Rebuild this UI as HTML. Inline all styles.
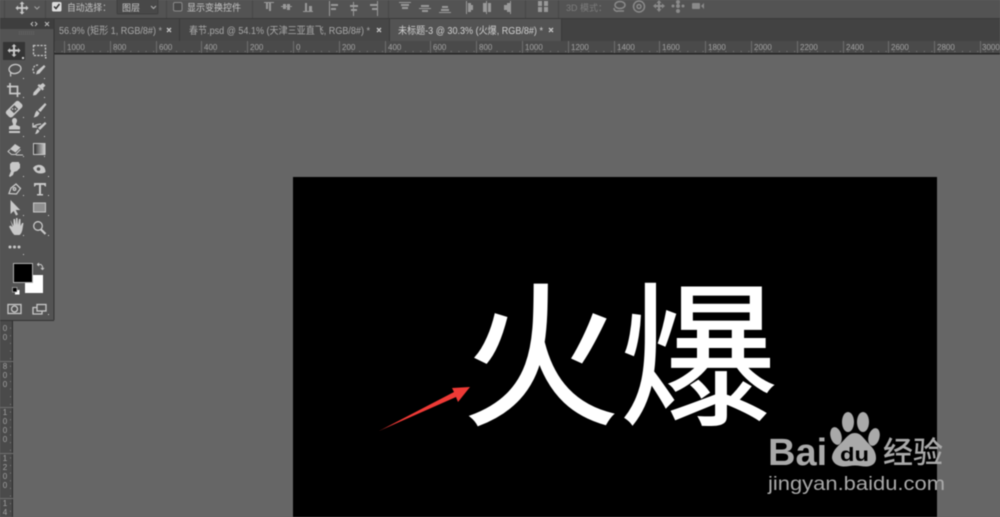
<!DOCTYPE html>
<html><head><meta charset="utf-8">
<style>
html,body{margin:0;padding:0;background:#666;}
body{width:1000px;height:517px;overflow:hidden;position:relative;font-family:"Liberation Sans","Noto Sans CJK SC",sans-serif;}
svg{position:absolute;left:0;top:0;}
text{font-family:"Liberation Sans","Noto Sans CJK SC",sans-serif;}
.soft{filter:blur(.45px);}
</style></head><body>
<svg width="1000" height="517" viewBox="0 0 1000 517" xmlns="http://www.w3.org/2000/svg">
<rect width="1000" height="517" fill="#666"/>
<g class="soft">
<!-- options bar -->
<rect width="1000" height="19" fill="#535353"/>
<rect y="18" width="1000" height="1" fill="#3a3a3a"/>
<!-- tabs -->
<rect y="19" width="1000" height="22" fill="#424242"/>
<rect x="54" y="19" width="125" height="22" fill="#474747"/>
<rect x="179" y="19" width="211" height="22" fill="#474747"/>
<rect x="390" y="19" width="171" height="22" fill="#535353"/>
<rect x="389" y="19" width="1" height="22" fill="#3a3a3a"/><rect x="561" y="19" width="1" height="22" fill="#3a3a3a"/><rect x="179" y="19" width="1" height="22" fill="#3a3a3a"/>
<g font-size="10" fill="#a8a8a8">
<text x="59" y="34" textLength="103" lengthAdjust="spacingAndGlyphs">56.9% (矩形 1, RGB/8#) *</text>
<text x="189" y="34" textLength="181" lengthAdjust="spacingAndGlyphs">春节.psd @ 54.1% (天津三亚直飞, RGB/8#) *</text>
<text x="398" y="34" fill="#d0d0d0" textLength="145" lengthAdjust="spacingAndGlyphs">未标题-3 @ 30.3% (火爆, RGB/8#) *</text>
</g>
<g stroke="#c8c8c8" stroke-width="1.300">
<path d="M167 28l4 4m0-4l-4 4M377 28l4 4m0-4l-4 4M549 28l4 4m0-4l-4 4"/>
</g>
<!-- ruler top -->
<rect y="41" width="1000" height="13" fill="#4a4a4a"/>
<rect y="53" width="1000" height="1.500" fill="#262626"/>
<g stroke="#6e6e6e" stroke-width="1" fill="none">
<path d="M64.500 41v12M110.500 41v12M156.500 41v12M201.500 41v12M247.500 41v12M293.500 41v12M339.500 41v12M385.500 41v12M430.500 41v12M476.500 41v12M522.500 41v12M568.500 41v12M614.500 41v12M659.500 41v12M705.500 41v12M751.500 41v12M797.500 41v12M843.500 41v12M888.500 41v12M934.500 41v12M980.500 41v12"/>
</g>
<g font-size="8" fill="#a2a2a2">
<text x="67" y="50">1000</text><text x="113" y="50">800</text><text x="159" y="50">600</text><text x="204" y="50">400</text><text x="250" y="50">200</text><text x="296" y="50">0</text><text x="342" y="50">200</text><text x="388" y="50">400</text><text x="433" y="50">600</text><text x="479" y="50">800</text><text x="525" y="50">1000</text><text x="571" y="50">1200</text><text x="617" y="50">1400</text><text x="662" y="50">1600</text><text x="708" y="50">1800</text><text x="754" y="50">2000</text><text x="800" y="50">2200</text><text x="846" y="50">2400</text><text x="891" y="50">2600</text><text x="937" y="50">2800</text><text x="982" y="50">3000</text>
</g>
<g stroke="#7d7d7d" stroke-width="1" stroke-dasharray="1 6.630">
<path d="M54 51.500h946"/>
</g>
<!-- ruler left -->
<rect x="0" y="54" width="13" height="463" fill="#4a4a4a"/>
<rect x="12" y="54" width="1" height="463" fill="#2c2c2c"/>
<g stroke="#6e6e6e" stroke-width="1"><path d="M0 361.500h13M0 407.500h13M0 453.500h13M0 498.500h13"/></g>
<g stroke="#7d7d7d" stroke-width="1" stroke-dasharray="1 6.630"><path d="M10.500 320v197"/></g>
<g font-size="8" fill="#a2a2a2" text-anchor="middle">
<text x="5" y="331">0</text><text x="5" y="340">0</text>
<text x="5" y="369">8</text><text x="5" y="378">0</text><text x="5" y="387">0</text>
<text x="5" y="415">1</text><text x="5" y="424">0</text><text x="5" y="433">0</text><text x="5" y="442">0</text>
<text x="5" y="461">1</text><text x="5" y="470">2</text><text x="5" y="479">0</text><text x="5" y="488">0</text>
<text x="5" y="506">1</text><text x="5" y="515">4</text>
</g>
<!-- options content -->
<path d="M22 1.500l2.500 2.500h-1.600v3.100H26V5.500L28.500 8 26 10.500V8.900h-3.100V12h1.600L22 14.500 19.500 12h1.600V8.900H18v1.600L15.500 8 18 5.500v1.600h3.100V4h-1.600z" fill="#c9c9c9"/>
<path d="M34.500 6.500l2.500 2.500 2.500-2.500" stroke="#a5a5a5" fill="none"/>
<path d="M4.500 0v18M45.500 0v18M166.500 0v18" stroke="#474747"/>
<rect x="52" y="2" width="9.500" height="9.500" rx="1.500" fill="#dcdcdc"/>
<path d="M54 6.500l2 2 3.500-4.500" stroke="#333" stroke-width="1.500" fill="none"/>
<text x="67" y="11" font-size="9.500" fill="#c4c4c4" textLength="44" lengthAdjust="spacingAndGlyphs">自动选择：</text>
<rect x="117" y="-3" width="41" height="17" rx="1" fill="#484848" stroke="#404040"/>
<text x="122" y="11" font-size="9" fill="#c8c8c8">图层</text>
<path d="M151 6l2.500 2.500L156 6" stroke="#b0b0b0" fill="none"/>
<rect x="173.500" y="2.500" width="8.500" height="8.500" rx="1.500" fill="#484848" stroke="#8a8a8a"/>
<text x="187" y="11" font-size="9.500" fill="#c4c4c4" textLength="54" lengthAdjust="spacingAndGlyphs">显示变换控件</text>
<path d="M252.500 0v18M388.500 0v18M525.500 0v18M558.500 0v18" stroke="#474747"/>
<g fill="#999">
<path d="M264 2h10v1h-3v8h-2V3h-1v6h-2V3h-2zM283 4h3v2h1V4h3v2h2v1h-2v3h-3V7h-1v2h-3V7h-2V6h2zM305 3h2v8h2V6h3v5h1v1h-10v-1h2zM329 1h1v15h-1zM331 4h7v2h-7zM331 8h5v2h-5zM353 2h1v14h-1zM350 5h8v2h-8zM351 9h6v2h-6zM377 1h1v15h-1zM370 4h7v2h-7zM372 8h5v2h-5z"/>
<path d="M399 2h12v1h-12zM401 4h8v2h-8zM402 7h6v2h-6zM419 8h12v1h-12zM421 5h8v2h-8zM422 10h6v2h-6zM439 12h12v1h-12zM441 9h8v2h-8zM442 6h6v2h-6z"/>
<path d="M466 1h1v13h-1zM468 3h3v9h-3zM471 5h2v5h-2zM486 1h1v13h-1zM483 3h3v9h-3zM488 3h3v9h-3zM510 1h1v13h-1zM507 3h3v9h-3zM504 5h3v5h-3z"/>
<path d="M538 1h4v5h-4zM544 1h4v5h-4zM538 7h4v5h-4zM544 7h4v5h-4z"/>
</g>
<text x="566" y="11" font-size="9" fill="#7c7c7c">3D 模式：</text>
<g fill="none" stroke="#8a8a8a" stroke-width="1.500">
<ellipse cx="620" cy="5" rx="5" ry="3.500"/><path d="M614 8a3 3 0 0 0 4 3h6"/>
<circle cx="639" cy="6.500" r="5.500"/><circle cx="639" cy="6.500" r="2"/>
</g>
<g fill="#8a8a8a">
<path d="M659 0l2.500 3h-1.500v2h2V3.500l3 2.500-3 2.500V7h-2v2h1.500L659 12l-2.500-3H658V7h-2v1.500L653 6l3-2.500V5h2V3h-1.500z"/>
<circle cx="678" cy="2" r="2"/><circle cx="678" cy="11" r="2"/><circle cx="673" cy="6" r="1.500"/><circle cx="683" cy="6" r="1.500"/><circle cx="678" cy="6" r="2"/>
<rect x="692" y="3" width="8" height="6" rx="1"/><path d="M701 6l3-3v6z"/>
</g>
<!-- toolbar panel -->
<rect x="0" y="19" width="54" height="301" fill="#535353"/>
<rect x="53.500" y="19" width="1" height="301" fill="#333"/>
<rect x="0" y="320" width="54" height="1" fill="#333"/>
<rect x="0" y="19" width="54" height="10" fill="#3e3e3e"/>
<g stroke="#bdbdbd" stroke-width="1" fill="none"><path d="M33 22l-2 2 2 2M35 22l2 2-2 2M45 22l2 2 2-2M45 26l2-2 2 2"/></g>
<path d="M19 32h16M19 34h16" stroke="#6a6a6a" stroke-dasharray="1 1"/>
<rect x="3" y="42" width="22" height="18" fill="#353535"/>
<!-- tool icons -->
<g fill="#c8c8c8">
<path d="M14 44l2.500 2.500h-1.500v3h3V48l2.500 2.500L18 53v-1.500h-3v3h1.500L14 57l-2.500-2.500H13v-3h-3V53l-2.500-2.500L10 48v1.500h3v-3h-1.500z"/>
<path d="M44 65l1.500 1.500-6 7-3.500 1 1-3.500z"/>
<path d="M43 83l2.500 2.500-2.500 2.500 1 1-1.500 1.500-5-5 1.500-1.500 1 1zM38.500 87l2.500 2.500-5 5.500-3 .5.500-3z"/>
<g transform="rotate(-45 14 109)"><rect x="5" y="105" width="18" height="8.500" rx="2.500"/><rect x="11" y="106.500" width="6" height="5.500" fill="#535353"/><circle cx="13" cy="108" r=".8"/><circle cx="15" cy="110" r=".8"/></g>
<path d="M45 103l1.500 1.500-6 7.500-2.500-2zM37 110.500l2.500 2.500c-1 3-3 4-6 4.500 1.500-1.500 1-5 3.500-7z"/>
<path d="M12 120.500a2.500 2.500 0 0 1 5 0c0 2-1.200 2.500-1 4.500l4 1.500v3H9v-3l4-1.500c.2-2-1-2.500-1-4.500zM9 131h11v2H9z"/>
<path d="M45 122l1.500 1.500-6.500 6.500-2-2zM37.500 129l2 2c-1 2-2.500 3-4.500 3 1.200-1.500 1-3.500 2.500-5z"/>
<path d="M15 144l5.500 3.500-5 5-5.500-3.500z"/>
<path d="M10 164l2-2h7v1l1 1v4l-3 3-3 1-1 3-3 2-1-1 2-5-1-2z"/>
<path d="M33 168c2-3.500 8-4.500 11-1 1 1.500 1.500 3 1.500 5-1 1-3 1.500-5 1.500-4 0-6-2-7.500-5.500z"/>
<path d="M34 183h12v3.500h-1l-1-1.500h-3v9h2v1.500h-6V194h2v-9h-3l-1 1.500h-1z"/>
<path d="M10.500 200v14l3.200-3 2.300 4.500 2-1-2.300-4.500h4.500z"/>
<path d="M11 221l2.500 5v-7h1.500l1 6v-7h1.500l.5 7 1-6h1.500v7l1.500-3h1.500l-1 6c-.5 3-1.500 5-3 6h-5c-2-1.500-3-4-5.500-8.500l1.500-1 2 1.500-2-6.500z"/>
<circle cx="10" cy="247" r="1.500"/><circle cx="14.500" cy="247" r="1.500"/><circle cx="19" cy="247" r="1.500"/>
</g>
<rect x="25" y="275" width="18" height="18" fill="#fff"/>
<rect x="13.500" y="263.500" width="19" height="19" fill="#000" stroke="#b0b0b0"/>
<rect x="15" y="290" width="4.500" height="4.500" fill="#fff"/>
<rect x="12.500" y="287.500" width="4.500" height="4.500" fill="#000" stroke="#bbb" stroke-width=".7"/>
<g fill="none" stroke="#c8c8c8" stroke-width="1.300">
<rect x="33.500" y="45.500" width="12" height="10" stroke-dasharray="2.200 1.300"/>
<ellipse cx="15" cy="69" rx="6" ry="4.500" transform="rotate(-10 15 69)"/><path d="M11 72.500c-1 1.500 0 2.500-.5 4"/>
<path d="M38 65c-3 0-5 2-5 5 0 2 1 3 2 4" stroke-dasharray="2 1.200"/>
<path d="M10 83v10.500h10.500M7 86.500h10.500V97" stroke-width="1.700"/>
<path d="M33 127c2-2 6-3 8-3M33 123v4h4"/>
<path d="M10 149.500l-2 2 3.500 3h4l5-5M16 155h7" stroke-width="1"/>
<path d="M9 193.500l2-5.500 5-4 4.500 4.500-4 5.500z"/><circle cx="14.500" cy="189" r="1.300"/>
<circle cx="38" cy="226" r="4.300"/><path d="M41 229.500l4.500 4.500" stroke-width="2.200"/>
<path d="M39 263l-1.500 1.500 1.500 1.500M38 264.500h3l1.500 2v2M41 268l1.500 1.500 1.500-1.500" stroke-width="1"/>
<rect x="8" y="304.500" width="13" height="9"/><circle cx="14.500" cy="309" r="3"/>
<rect x="37" y="304.500" width="9" height="6.500"/><path d="M36.500 307.500h-3.500v6.500h9v-3"/>
</g>
<circle cx="38.500" cy="169" r="1.800" fill="#535353"/>
<defs><linearGradient id="g" x1="0" x2="1"><stop offset="0" stop-color="#2a2a2a"/><stop offset="1" stop-color="#cfcfcf"/></linearGradient></defs>
<rect x="33.500" y="143.500" width="11.500" height="11" fill="url(#g)" stroke="#c8c8c8"/>
<rect x="33.500" y="203" width="12" height="9" fill="#8f8f8f" stroke="#c8c8c8"/>
<g fill="#d0d0d0">
<path d="M22 57h2v2h-2zM45 57h1.500v1.500H45zM23 78h1v1h-1zM44 78h1v1h-1zM23 97h1v1h-1zM44 97h1v1h-1zM23 117h1v1h-1zM44 117h1v1h-1zM23 136h1v1h-1zM44 136h1v1h-1zM23 156h1v1h-1zM44 156h1v1h-1zM23 176h1v1h-1zM48 176h1v1h-1zM23 195h1v1h-1zM48 195h1v1h-1zM23 215h1v1h-1zM48 215h1v1h-1zM23 235h1v1h-1zM48 235h1v1h-1zM23 254h1v1h-1zM48 314h1v1h-1z"/>
</g>
<!-- canvas -->
<rect x="293" y="177" width="644" height="340" fill="#000"/>
<g transform="translate(462 413) scale(1.050 1.035)">
<text x="0" y="0" font-size="150" font-weight="400" fill="#fff" stroke="#fff" stroke-width="1.200" style='font-family:"Noto Sans CJK SC",sans-serif'>火爆</text>
</g>
<!-- arrow -->
<path d="M379 431L454 392 452 388 470 387 458 402 456 397z" fill="#ee3a36"/>
<!-- watermark -->
<g fill="#a9a9a9">
<ellipse cx="848" cy="422" rx="6" ry="10"/><ellipse cx="863" cy="422" rx="6" ry="10"/><ellipse cx="836" cy="436" rx="5.500" ry="9" transform="rotate(-15 836 436)"/><ellipse cx="874" cy="437" rx="5.500" ry="9" transform="rotate(15 874 437)"/>
<path d="M855 433c6 0 9 6 14 11 5 5 7 9 7 14 0 6-5 8.500-10 8.500-4 0-7-1-11-1s-7 1-11 1c-5 0-11-2.500-12-8.500 0-5 3-9 7-13 6-5 9-12 16-12z"/>
</g>
<text x="768" y="465" font-size="38" font-weight="700" fill="#a9a9a9">Bai</text>
<text x="840" y="461" font-size="19" font-weight="700" fill="#000" textLength="29" lengthAdjust="spacingAndGlyphs">du</text>
<text x="883" y="463" font-size="30" font-weight="500" fill="#a9a9a9" style='font-family:"Noto Sans CJK SC",sans-serif'>经验</text>
<text x="768" y="490" font-size="19.500" fill="#a9a9a9" textLength="177" lengthAdjust="spacingAndGlyphs">jingyan.baidu.com</text>
</g>
</svg>
</body></html>
